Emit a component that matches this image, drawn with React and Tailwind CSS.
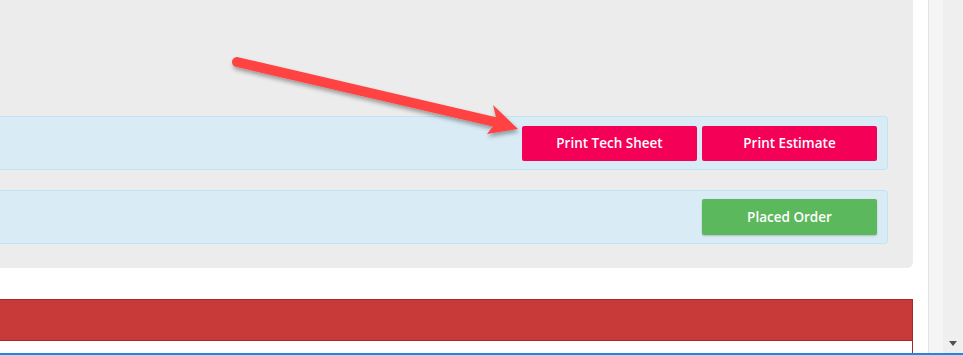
import React from "react";

export default function App() {
  return (
    <div className="relative w-[963px] h-[355px] overflow-hidden bg-white flex" style={{ fontFamily: '"Open Sans", "Liberation Sans", sans-serif' }}>
      <div className="w-[928px] flex flex-col">
        <div className="w-[913px] h-[268px] bg-[#ececec] rounded-br-[6px] pt-[116px] pr-[25px] flex flex-col gap-[20px]">
          <div className="h-[54px] bg-[#d9ecf6] border border-[#bde6f2] rounded-r-[4px] border-l-0 flex items-center justify-end gap-[5px] pr-[10px]">
            <button className="w-[175px] h-[35px] bg-[#f50057] rounded-[2px] text-white text-[13.5px] font-semibold">Print Tech Sheet</button>
            <button className="w-[175px] h-[35px] bg-[#f50057] rounded-[2px] text-white text-[13.5px] font-semibold">Print Estimate</button>
          </div>
          <div className="h-[54px] bg-[#d9ecf6] border border-[#bde6f2] rounded-r-[4px] border-l-0 flex items-center justify-end pr-[10px]">
            <button className="w-[175px] h-[36px] bg-[#5cb85c] rounded-[2px] text-white text-[13.5px] font-semibold shadow-[0_1px_2px_rgba(0,0,0,0.2)]">Placed Order</button>
          </div>
        </div>
        <div className="h-[31px]" />
        <div className="w-[913px] flex-1 border-r border-[#a62a2a]">
          <div className="h-[42px] bg-[#c83939] border-y border-[#a62a2a]" />
        </div>
      </div>
      <div className="w-[15px] h-full bg-[#f5f5f5] border-l border-[#e4e4e4]" />
      <div className="w-[20px] h-full bg-[#efefef] relative">
        <div className="absolute left-[6px] top-[341px] w-0 h-0 border-l-[4.5px] border-r-[4.5px] border-t-[5px] border-l-transparent border-r-transparent border-t-[#505050]" />
      </div>
      <div className="absolute left-0 right-0 bottom-0 h-[2px] bg-[#1e88e5]" />
      <svg className="absolute left-0 top-0 pointer-events-none" width="963" height="355">
        <defs>
          <filter id="sh" x="-20%" y="-50%" width="140%" height="200%">
            <feDropShadow dx="1" dy="3" stdDeviation="2" floodColor="#000" floodOpacity="0.35" />
          </filter>
        </defs>
        <g filter="url(#sh)" fill="#ff4242" stroke="none">
          <line x1="237" y1="62" x2="495" y2="122" stroke="#ff4242" strokeWidth="10" strokeLinecap="round" />
          <polygon points="518,129 493,105 497,121 487,134" />
        </g>
      </svg>
    </div>
  );
}
